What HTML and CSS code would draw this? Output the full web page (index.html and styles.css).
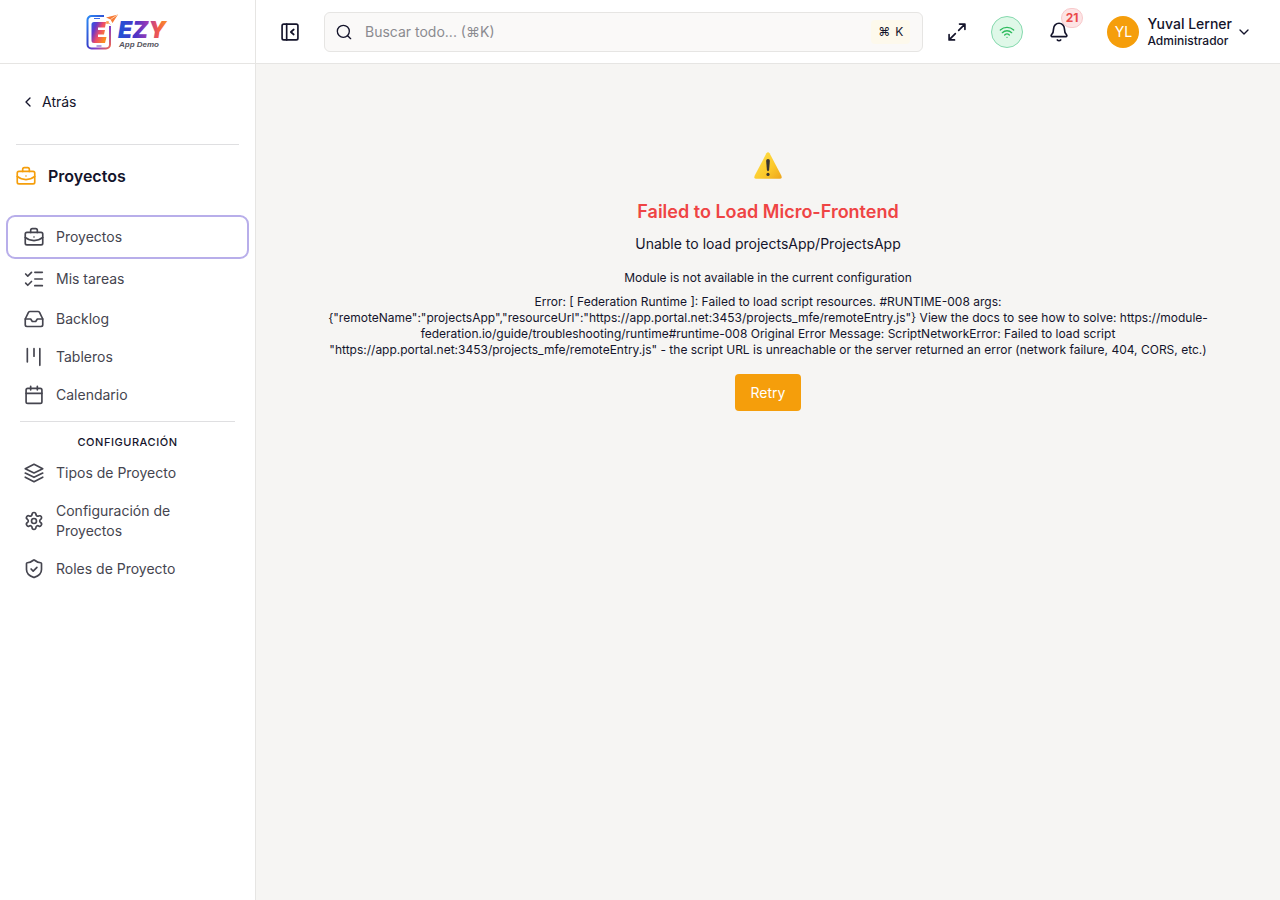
FILE: index.html
```html
<!DOCTYPE html>
<html lang="es">
<head>
<meta charset="utf-8">
<meta name="viewport" content="width=device-width, initial-scale=1">
<title>Proyectos</title>
<link rel="stylesheet" href="styles.css">
</head>
<body>
<div class="app">
  <aside class="sidebar">
    <div class="brand">
      <svg class="logo" viewBox="0 0 84 38" role="img" aria-label="EZY App Demo">
        <defs>
          <linearGradient id="frame" x1="0" y1="0" x2="1" y2="1">
            <stop offset="0" stop-color="#2b8bf5"/><stop offset="0.45" stop-color="#3344cc"/><stop offset="0.7" stop-color="#8a3fc4"/><stop offset="1" stop-color="#f46a4a"/>
          </linearGradient>
          <linearGradient id="mark" x1="0" y1="0" x2="1" y2="0.600">
            <stop offset="0" stop-color="#2a5be6"/><stop offset="0.3" stop-color="#6a38c8"/><stop offset="0.6" stop-color="#ee4b6a"/><stop offset="1" stop-color="#fb8c22"/>
          </linearGradient>
          <linearGradient id="word" x1="0" y1="0" x2="1" y2="0">
            <stop offset="0" stop-color="#1d55d8"/><stop offset="0.35" stop-color="#4b34c6"/><stop offset="0.6" stop-color="#a13bb4"/><stop offset="0.78" stop-color="#f0564e"/><stop offset="1" stop-color="#fb9a1c"/>
          </linearGradient>
        </defs>
        <path d="M18 3H5.500a4 4 0 0 0-4 4v24.500a4 4 0 0 0 4 4H20a4 4 0 0 0 4-4V13" fill="none" stroke="url(#frame)" stroke-width="2"/>
        <path d="M8 5.500h6" stroke="#3a6be8" stroke-width="1"/>
        <path d="M10.500 33h5" stroke="#6f45c8" stroke-width="1"/>
        <path d="M8 9h12l-1 5.500h-7V17h7l-1 4.500h-6v2.500h8.500l-1.500 6H8q-2.500 0-2.500-2.500v-16Q5.500 9 8 9z" fill="url(#mark)"/>
        <path d="M20 4.500 32 1.500 26.500 10l-2-3.500z" fill="#f77a35"/>
        <path d="M24.500 6.500 32 1.500" stroke="#ffe0c4" stroke-width="0.800"/>
        <path d="M20.500 8.500h2v2h-2zM23 10l1.500 1.500" fill="#fb9a4a" stroke="#fb9a4a" stroke-width="0.600"/>
        <text class="logo-word" x="32" y="25" fill="url(#word)">EZY</text>
        <text class="logo-tag" x="33" y="34">App Demo</text>
      </svg>
    </div>
    <div class="side-body">
      <button class="back" type="button">
        <svg class="icon icon-sm" viewBox="0 0 24 24"><path d="m15 18-6-6 6-6"/></svg>
        Atrás
      </button>
      <h2 class="module">
        <svg class="icon icon-md" viewBox="0 0 24 24"><rect x="1.500" y="6.500" width="21" height="15" rx="2"/><path d="M8 6.500V4a2 2 0 0 1 2-2h4a2 2 0 0 1 2 2v2.500M1.500 12.500c6 5 15 5 21 0M12 12h.01"/></svg>
        Proyectos
      </h2>
      <nav class="nav" aria-label="Proyectos">
        <a class="item item-active" href="#">
          <svg class="icon icon-md" viewBox="0 0 24 24"><rect x="1.500" y="6.500" width="21" height="15" rx="2"/><path d="M8 6.500V4a2 2 0 0 1 2-2h4a2 2 0 0 1 2 2v2.500M1.500 12.500c6 5 15 5 21 0M12 12h.01"/></svg>
          <span>Proyectos</span></a>
        <a class="item item-tasks" href="#">
          <svg class="icon icon-md" viewBox="0 0 24 24"><path d="m2 6 2.500 2.500L9 4M2 17l2.500 2.500L9 15M13 4h9M13 12h9M13 20h9"/></svg>
          <span>Mis tareas</span></a>
        <a class="item" href="#">
          <svg class="icon icon-md" viewBox="0 0 24 24"><path d="M22.500 12H16l-2 3h-4l-2-3H1.500"/><path d="M5.200 4.400 1.500 12v7a2 2 0 0 0 2 2h17a2 2 0 0 0 2-2v-7l-3.700-7.600A2 2 0 0 0 17 3H7a2 2 0 0 0-1.800 1.400z"/></svg>
          <span>Backlog</span></a>
        <a class="item" href="#">
          <svg class="icon icon-md" viewBox="0 0 24 24"><path d="M4 2v16M12 2v9M19 2v20"/></svg>
          <span>Tableros</span></a>
        <a class="item" href="#">
          <svg class="icon icon-md" viewBox="0 0 24 24"><rect x="2.500" y="4" width="19" height="18" rx="2"/><path d="M8 1.500V6M16 1.500V6M2.500 10h19"/></svg>
          <span>Calendario</span></a>
        <h3 class="group">CONFIGURACIÓN</h3>
        <a class="item" href="#">
          <svg class="icon icon-md" viewBox="0 0 24 24"><path d="m12 1.500 10.500 5.300L12 12 1.500 6.800zM1.500 12 12 17.200 22.500 12M1.500 17 12 22.500 22.500 17"/></svg>
          <span>Tipos de Proyecto</span></a>
        <a class="item" href="#">
          <svg class="icon icon-md" viewBox="0 0 24 24"><path d="M9.700 4.100a2.300 2.300 0 0 1 4.600 0 2.300 2.300 0 0 0 3.300 1.900 2.300 2.300 0 0 1 2.300 4 2.300 2.300 0 0 0 0 3.900 2.300 2.300 0 0 1-2.300 4 2.300 2.300 0 0 0-3.300 2 2.300 2.300 0 0 1-4.600 0 2.300 2.300 0 0 0-3.300-2 2.300 2.300 0 0 1-2.300-4 2.300 2.300 0 0 0 0-3.900 2.300 2.300 0 0 1 2.300-4 2.300 2.300 0 0 0 3.300-1.900z"/><circle cx="12" cy="12" r="3"/></svg>
          <span>Configuración de Proyectos</span></a>
        <a class="item" href="#">
          <svg class="icon icon-md" viewBox="0 0 24 24"><path d="M21 12.500c0 5-3.500 7.800-8.700 9.500a1 1 0 0 1-.6 0C6.500 20.300 3 17.500 3 12.500V5.500a1 1 0 0 1 1-1c2.500 0 5-1.200 7.200-3a1.200 1.200 0 0 1 1.600 0c2.200 1.800 4.700 3 7.200 3a1 1 0 0 1 1 1z"/><path d="m8.500 12 2.500 2.500 4.500-4.500"/></svg>
          <span>Roles de Proyecto</span></a>
      </nav>
    </div>
  </aside>
  <div class="column">
    <header class="topbar">
      <button class="icon-btn" type="button" aria-label="Contraer menú">
        <svg class="icon icon-md" viewBox="0 0 24 24"><rect x="2.500" y="2.500" width="19" height="19" rx="2"/><path d="M8 2.500v19M16.500 15l-3.500-3 3.500-3"/></svg>
      </button>
      <label class="search">
        <svg class="icon icon-sm" viewBox="0 0 24 24"><circle cx="11" cy="11" r="9"/><path d="m22 22-4.500-4.500"/></svg>
        <input class="search-input" type="text" placeholder="Buscar todo... (⌘K)" aria-label="Buscar todo">
        <kbd class="kbd"><span>⌘</span><span>K</span></kbd>
      </label>
      <div class="tools">
        <button class="icon-btn" type="button" aria-label="Pantalla completa">
          <svg class="icon icon-md" viewBox="0 0 24 24"><path d="M15 2.500h6.500V9M21.500 2.500 14 10M9 21.500H2.500V15M2.500 21.500 10 14"/></svg>
        </button>
        <button class="wifi" type="button" aria-label="Conectado">
          <svg class="icon icon-sm" viewBox="0 0 24 24"><path d="M12 20h.01M2 9a15 15 0 0 1 20 0M5 13a10 10 0 0 1 14 0M8.500 16.500a5 5 0 0 1 7 0"/></svg>
        </button>
        <button class="icon-btn bell" type="button" aria-label="Notificaciones">
          <svg class="icon icon-md" viewBox="0 0 24 24"><path d="M10 21.500c1 1.300 3 1.300 4 0M2.800 15.600A1.200 1.200 0 0 0 3.500 17.500h17a1.200 1.200 0 0 0 .7-1.900C19.600 14 18.500 12.500 18.500 8A6.500 6.500 0 0 0 5.500 8c0 4.500-1.100 6-2.700 7.600z"/></svg>
          <span class="badge">21</span>
        </button>
        <button class="user" type="button">
          <span class="avatar">YL</span>
          <span class="who"><span class="name">Yuval Lerner</span><span class="role">Administrador</span></span>
          <svg class="icon icon-sm" viewBox="0 0 24 24"><path d="m6 9 6 6 6-6"/></svg>
        </button>
      </div>
    </header>
    <main class="error">
      <svg class="warn" viewBox="0 0 32 32" role="img" aria-label="Advertencia">
        <defs><linearGradient id="sign" x1="0" y1="0" x2="1" y2="1"><stop offset="0" stop-color="#ffe34d"/><stop offset="0.600" stop-color="#fcc92c"/><stop offset="1" stop-color="#eda51c"/></linearGradient></defs>
        <path d="M14.300 2.500q1.700-2.500 3.400 0L30.300 26.500q1 3-1.800 3h-25q-2.800 0-1.800-3z" fill="url(#sign)"/>
        <path d="M14 10.500q0-2 2-2t2 2l-.8 9.500q-.2 1.500-1.200 1.500T14.800 20z" fill="#3a3530"/><circle cx="16" cy="25" r="1.700" fill="#3a3530"/>
      </svg>
      <h1 class="title">Failed to Load Micro-Frontend</h1>
      <p class="lead">Unable to load projectsApp/ProjectsApp</p>
      <p class="note">Module is not available in the current configuration</p>
      <p class="detail">Error: [ Federation Runtime ]: Failed to load script resources. #RUNTIME-008 args: {"remoteName":"projectsApp","resourceUrl":"https://app.portal.net:3453/projects_mfe/remoteEntry.js"} View the docs to see how to solve: https://module-federation.io/guide/troubleshooting/runtime#runtime-008 Original Error Message: ScriptNetworkError: Failed to load script "https://app.portal.net:3453/projects_mfe/remoteEntry.js" - the script URL is unreachable or the server returned an error (network failure, 404, CORS, etc.)</p>
      <button class="retry" type="button">Retry</button>
    </main>
  </div>
</div>
</body>
</html>
```

FILE: styles.css
```css
* { box-sizing: border-box; }
body {
  margin: 0;
  font-family: Inter, "Liberation Sans", "DejaVu Sans", sans-serif;
  font-size: 14px;
  line-height: 20px;
  color: #14142b;
  background: #f6f5f3;
}
button, input { font: inherit; color: inherit; }
button { border: 0; padding: 0; background: none; cursor: pointer; }
h1, h2, h3, p { margin: 0; }

.app { display: flex; min-height: 100vh; }
.icon { fill: none; stroke: currentColor; stroke-width: 2; stroke-linecap: round; stroke-linejoin: round; flex: none; display: block; }
.icon-sm { width: 16px; height: 16px; }
.icon-md { width: 20px; height: 20px; }

.sidebar { flex: none; width: 256px; background: #fff; border-right: 1px solid #e6e5e3; }
.brand { height: 64px; display: flex; align-items: center; justify-content: center; border-bottom: 1px solid #e6e5e3; }
.logo { width: 84px; height: 38px; display: block; overflow: visible; }
.logo-word { font-family: Inter, sans-serif; font-size: 23px; font-weight: 900; font-style: italic; }
.logo-tag { font-family: "Liberation Sans", sans-serif; font-size: 8px; font-weight: 700; font-style: italic; fill: #55555e; }

.back { display: flex; align-items: center; gap: 6px; margin: 18px 16px 0; padding: 10px 4px; }
.module { display: flex; align-items: center; gap: 12px; margin: 22px 16px 0; padding-top: 19px; border-top: 1px solid #dfdfe1; font-size: 16px; line-height: 24px; font-weight: 600; }
.module .icon { color: #f59e0b; }
.nav { display: flex; flex-direction: column; padding: 30px 8px; }
.item { display: flex; align-items: center; gap: 12px; padding: 9px 48px 9px 16px; color: #45454f; text-decoration: none; }
.item-active { margin: 0 1px 4px; padding-left: 15px; border-radius: 6px; outline: 2px solid #b8aeea; outline-offset: 1px; }
.item-tasks { margin-bottom: 2px; }
.group { margin: 7px 12px 0; padding: 12px 0 4px; border-top: 1px solid #dfdfe1; font-size: 11px; line-height: 16px; font-weight: 500; letter-spacing: 0.05em; text-align: center; }

.column { flex: 1; min-width: 0; display: flex; flex-direction: column; }
.topbar { height: 64px; display: flex; align-items: center; padding: 0 24px 0 16px; background: #fff; border-bottom: 1px solid #e6e5e3; }
.icon-btn { width: 36px; height: 36px; display: flex; align-items: center; justify-content: center; }
.search { flex: 1; min-width: 0; height: 40px; margin-left: 16px; padding: 0 12px 0 11px; display: flex; align-items: center; gap: 13px; background: #faf9f8; border: 1px solid #e6e5e3; border-radius: 6px; }
.search-input { flex: 1; min-width: 0; border: 0; padding: 0; background: none; outline: none; }
.search-input::placeholder { color: #8b8b90; opacity: 1; }
.kbd { display: flex; gap: 5px; padding: 2px 7px; background: #fdf9ec; border-radius: 4px; font-family: inherit; font-size: 12px; }
.tools { display: flex; align-items: center; gap: 16px; margin-left: 16px; }
.wifi { width: 32px; height: 32px; margin-right: 2px; display: flex; align-items: center; justify-content: center; border: 1px solid #86d9ae; border-radius: 50%; background: #dff8e8; color: #2dbb5d; }
.bell { position: relative; }
.badge { position: absolute; top: -6px; right: -6px; padding: 0 4px; border: 1px solid #f8c9cb; border-radius: 10px; background: #fde4e5; color: #ea4a4a; font-size: 12px; line-height: 18px; font-weight: 700; }
.user { display: flex; align-items: center; gap: 8px; margin-left: 14px; padding-right: 4px; text-align: left; }
.avatar { width: 32px; height: 32px; border-radius: 50%; background: #f59e0b; color: #fff; line-height: 32px; text-align: center; }
.who { display: flex; flex-direction: column; margin-right: -4px; }
.name { line-height: 18px; font-weight: 500; }
.role { font-size: 12px; line-height: 16px; font-weight: 500; }

.error { display: flex; flex-direction: column; align-items: center; padding: 87px 64px 32px; text-align: center; }
.warn { width: 30px; height: 30px; }
.title { margin-top: 17px; color: #ef4444; font-size: 18px; line-height: 28px; font-weight: 600; }
.lead { margin-top: 8px; }
.note { margin-top: 16px; font-size: 12px; line-height: 16px; }
.detail { margin-top: 8px; font-size: 12px; line-height: 16px; }
.retry { margin-top: 16px; padding: 8px 16px; border-radius: 4px; background: #f59e0b; color: #fff; line-height: 21px; }
```
